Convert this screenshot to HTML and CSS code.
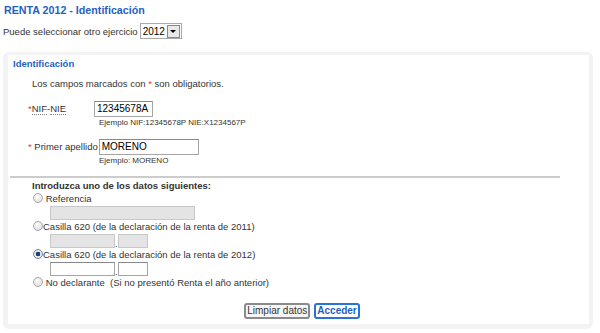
FILE: index.html
```html
<!DOCTYPE html>
<html lang="es">
<head>
  <meta charset="UTF-8" />
  <title>RENTA 2012 - Identificación</title>
  <link rel="stylesheet" href="styles.css">
</head>
<body>
  <h1 class="title">RENTA 2012 - Identificación</h1>
  <div class="year-row">
    <span>Puede seleccionar otro ejercicio</span>
    <span class="select">
      <span class="select-value">2012</span>
      <span class="select-btn"><span class="arrow"></span></span>
    </span>
  </div>

  <div class="panel">
    <div class="panel-body">
      <div class="legend">Identificación</div>
      <p class="note">Los campos marcados con <span class="req">*</span> son obligatorios.</p>

      <div class="field field-nif">
        <label class="lbl"><span class="req">*</span><abbr>NIF</abbr>-<abbr>NIE</abbr></label>
        <input type="text" class="txt txt-nif" value="12345678A">
      </div>
      <div class="hint">Ejemplo NIF:12345678P NIE:X1234567P</div>

      <div class="field field-name">
        <label class="lbl"><span class="req">*</span> Primer apellido</label>
        <input type="text" class="txt txt-name" value="MORENO">
      </div>
      <div class="hint">Ejemplo: MORENO</div>

      <hr class="sep">

      <div class="choices">
        <div class="choices-title">Introduzca uno de los datos siguientes:</div>

        <label class="opt"><input type="radio" name="dato"> Referencia</label>
        <div class="inputs"><input type="text" class="txt ref" disabled></div>

        <label class="opt"><input type="radio" name="dato">Casilla 620 (de la declaración de la renta de 2011)</label>
        <div class="inputs"><input type="text" class="txt euros" disabled><span class="dot">.</span><input type="text" class="txt cents" disabled></div>

        <label class="opt"><input type="radio" name="dato" checked>Casilla 620 (de la declaración de la renta de 2012)</label>
        <div class="inputs"><input type="text" class="txt euros"><span class="dot">.</span><input type="text" class="txt cents"></div>

        <label class="opt"><input type="radio" name="dato"> No declarante&nbsp; (Si no presentó Renta el año anterior)</label>
      </div>

      <div class="actions">
        <button class="btn">Limpiar datos</button>
        <button class="btn btn-main">Acceder</button>
      </div>
    </div>
  </div>
</body>
</html>
```

FILE: styles.css
```css
body {
  font-family: Arial, 'Liberation Sans', sans-serif;
  font-size: 9.5px;
  color: #333;
  background: #fff;
  margin: 0;
  padding: 3px 3px;
}
.title {
  font-size: 10.7px;
  font-weight: bold;
  color: #1f5fc0;
  margin: 0 0 0 1px;
  line-height: 14px;
}
.year-row {
  margin-top: 6px;
  display: flex;
  align-items: center;
  gap: 2px;
  height: 16px;
}
.select {
  display: inline-flex;
  align-items: center;
  box-sizing: border-box;
  border: 1px solid #aaa;
  height: 16px;
  width: 42px;
  padding-left: 2px;
  font-size: 10px;
  color: #000;
}
.select-value {
  flex: 1;
}
.select-btn {
  width: 11px;
  height: 11px;
  margin-right: 1px;
  border: 1px solid #888;
  background: #e8e8e8;
  display: flex;
  align-items: center;
  justify-content: center;
}
.arrow {
  width: 0;
  height: 0;
  border-left: 3px solid transparent;
  border-right: 3px solid transparent;
  border-top: 3px solid #000;
}
.panel {
  margin-top: 13px;
  background: #f3f3f3;
  border-radius: 6px;
  padding: 11px 4px 5px 5px;
  width: 581px;
}
.panel-body {
  background: #fff;
  padding-bottom: 5px;
}
.legend {
  width: max-content;
  background: #fff;
  margin-top: -8px;
  padding: 3px 5px 1px 5px;
  font-weight: bold;
  color: #1f5fc0;
  line-height: 12px;
}
.note {
  margin: 7px 0 0 24px;
  line-height: 12px;
}
.req {
  color: #e33;
}
.field {
  display: flex;
  align-items: center;
  margin: 10px 0 0 20px;
  height: 17px;
}
.lbl {
  margin-right: 1px;
}
.field-nif .lbl {
  width: 65px;
}
.lbl abbr {
  text-decoration: none;
  border-bottom: 1px dotted #888;
}
.txt {
  font-family: Arial, 'Liberation Sans', sans-serif;
  font-size: 10px;
  color: #000;
  height: 16px;
  box-sizing: border-box;
  border: 1px solid #a5a5a5;
  border-top-color: #888;
  padding: 0 2px;
  margin: 0;
  background: #fff;
}
.txt-nif {
  width: 59px;
}
.txt-name {
  width: 100px;
}
.hint {
  font-size: 8px;
  margin: 1px 0 0 91px;
  line-height: 10px;
}
.sep {
  border: 0;
  border-top: 2px solid #ccc;
  margin: 10px 29px 0 2px;
}
.choices {
  margin-left: 24px;
}
.choices-title {
  font-weight: bold;
  line-height: 12px;
  margin-top: 2px;
}
.opt {
  display: block;
  height: 14px;
  line-height: 14px;
}
.opt input {
  appearance: none;
  box-sizing: border-box;
  width: 10px;
  height: 10px;
  margin: 0 0 0 1px;
  vertical-align: -1px;
  border: 1px solid #a8a8a8;
  border-radius: 50%;
  background: radial-gradient(circle at 40% 35%, #fdfdfd, #d6d6d6);
}
.opt input:checked {
  border-color: #7a8aa0;
  background: radial-gradient(circle, #1e4f9c 0, #14366e 2px, #f0f0f0 2.6px, #cfcfcf 5px);
}
.inputs {
  display: flex;
  align-items: flex-end;
  margin-left: 18px;
  height: 14px;
}
.txt:disabled {
  background: #e4e4e4;
  border-color: #c8c8c8;
}
.inputs .txt {
  height: 14px;
}
.ref {
  width: 145px;
}
.euros {
  width: 65px;
}
.cents {
  width: 30px;
}
.dot {
  width: 3px;
  font-size: 9px;
  line-height: 8px;
}
.actions {
  display: flex;
  justify-content: center;
  gap: 4px;
  margin-top: 13px;
  padding-left: 7px;
}
.btn {
  font-family: Arial, 'Liberation Sans', sans-serif;
  font-size: 10px;
  color: #333;
  background: #f6f6f6;
  border: 2px solid #8a8a8a;
  border-radius: 3px;
  padding: 0 1px;
  height: 16px;
  line-height: 12px;
}
.btn-main {
  color: #1f5fc0;
  font-weight: bold;
  border-color: #2a72d8;
  background: #fff;
}
```
